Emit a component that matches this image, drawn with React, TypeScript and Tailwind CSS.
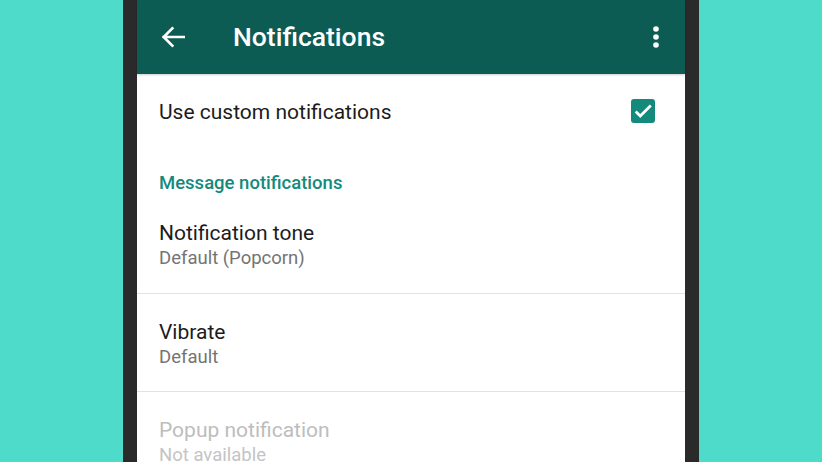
import React from "react";

type Pref = {
  title: string;
  summary: string;
  disabled?: boolean;
  divider?: boolean;
};

const prefs: Pref[] = [
  { title: "Notification tone", summary: "Default (Popcorn)", divider: true },
  { title: "Vibrate", summary: "Default", divider: true },
  { title: "Popup notification", summary: "Not available", disabled: true },
];

function PrefRow({ pref, first }: { pref: Pref; first?: boolean }) {
  return (
    <div
      className={`px-[22px] ${first ? "pt-[25px] pb-[22px]" : "pt-[25px] pb-[21px]"} ${
        pref.divider ? "border-b border-[#e2e2e2]" : ""
      }`}
    >
      <div
        className={`text-[21px] leading-[26px] ${
          pref.disabled ? "text-[#bdbdbd]" : "text-[#1c1c1c]"
        }`}
      >
        {pref.title}
      </div>
      <div
        className={`text-[18.5px] leading-[25px] ${
          pref.disabled ? "text-[#c4c4c4]" : "text-[#747474]"
        }`}
      >
        {pref.summary}
      </div>
    </div>
  );
}

export default function App() {
  return (
    <div
      className="w-[822px] h-[462px] overflow-hidden bg-[#4fdbc9] flex justify-center"
      style={{ fontFamily: "Roboto, 'Noto Sans', sans-serif" }}
    >
      <div className="w-[576px] h-full border-x-[14px] border-[#2a2a2a] bg-white flex flex-col">
        {/* Toolbar */}
        <div className="h-[74px] shrink-0 bg-[#0c5c53] flex items-center shadow-[0_1px_2px_rgba(0,0,0,0.2)] relative">
          <svg width="32" height="32" viewBox="0 0 24 24" className="ml-[20px] shrink-0">
            <path
              d="M20 12H5M11.5 5.5L5 12l6.5 6.5"
              fill="none"
              stroke="white"
              strokeWidth="2"
              strokeLinecap="square"
            />
          </svg>
          <div className="ml-[44px] text-white text-[26.5px] font-medium">
            Notifications
          </div>
          <svg width="8" height="24" viewBox="0 0 8 24" className="ml-auto mr-[25px]">
            <circle cx="4" cy="4" r="2.8" fill="white" />
            <circle cx="4" cy="12" r="2.8" fill="white" />
            <circle cx="4" cy="20" r="2.8" fill="white" />
          </svg>
        </div>

        {/* Use custom notifications */}
        <div className="h-[76px] shrink-0 flex items-center px-[22px]">
          <div className="text-[21px] leading-[26px] text-[#1c1c1c] flex-1">
            Use custom notifications
          </div>
          <div className="w-[24px] h-[24px] rounded-[3px] bg-[#138a7c] flex items-center justify-center mr-[8px] -mt-[2px]">
            <svg width="22" height="22" viewBox="0 0 24 24">
              <path
                d="M4 12.5l5 5L20.5 6"
                fill="none"
                stroke="white"
                strokeWidth="3"
              />
            </svg>
          </div>
        </div>

        {/* Category */}
        <div className="px-[22px] pt-[21px] text-[18.5px] leading-[24px] font-medium text-[#138a7c]">
          Message notifications
        </div>

        {prefs.map((p, i) => (
          <PrefRow key={p.title} pref={p} first={i === 0} />
        ))}
      </div>
    </div>
  );
}
